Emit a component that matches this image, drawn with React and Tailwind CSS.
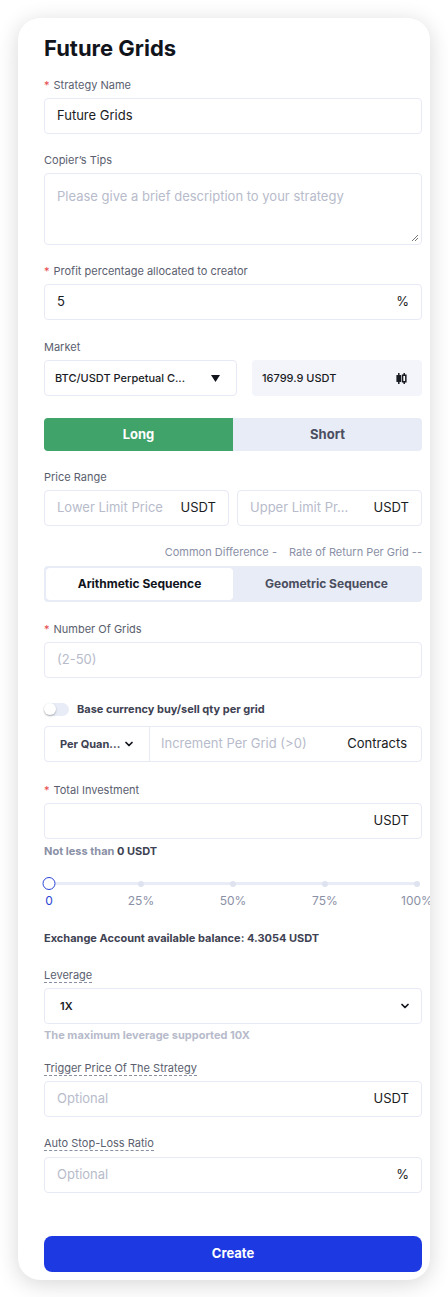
import { ChevronDown } from "lucide-react";

const font = { fontFamily: "Inter, 'Noto Sans', sans-serif" };

function Label({ children, required, dashed }) {
  return (
    <div className="flex h-4 items-center text-[11px] leading-4 text-[#5a5e6e]">
      {required && <span className="mr-1 text-[#e5484d]">*</span>}
      <span className={dashed ? "border-b border-dashed border-[#8a8fa0] leading-[14px]" : ""}>
        {children}
      </span>
    </div>
  );
}

function Input({ placeholder, value, unit }) {
  return (
    <div className="flex h-9 items-center rounded border border-[#e7eaf5] bg-white px-3">
      <span className={`flex-1 truncate text-[13px] ${value ? "text-[#1a1c24]" : "text-[#b7bbcb]"}`}>
        {value || placeholder}
      </span>
      {unit && <span className="ml-2 text-[13px] text-[#1a1c24]">{unit}</span>}
    </div>
  );
}

function CandleIcon() {
  return (
    <svg width="13" height="13" viewBox="0 0 12 12" fill="none" stroke="#1a1c24" strokeWidth="1.4">
      <line x1="3.5" y1="1" x2="3.5" y2="11" />
      <rect x="2" y="3.5" width="3" height="5" fill="#1a1c24" />
      <line x1="8.5" y1="1" x2="8.5" y2="11" />
      <rect x="7" y="3" width="3" height="6" fill="#fff" />
    </svg>
  );
}

function Slider() {
  const marks = [0, 25, 50, 75, 100];
  return (
    <div className="relative ml-[5px] mt-[20px] h-[34px] w-[368px]">
      <div className="absolute left-0 right-0 top-[3px] h-[3px] rounded bg-[#e8ecf6]" />
      {marks.slice(1).map((m) => (
        <div
          key={m}
          className="absolute top-[1.5px] h-[6px] w-[6px] -translate-x-1/2 rounded-full bg-[#dfe3f0]"
          style={{ left: `${m}%` }}
        />
      ))}
      <div className="absolute -top-[2px] left-0 h-[13px] w-[13px] -translate-x-1/2 rounded-full border-[1.5px] border-[#2a45d6] bg-white" />
      {marks.map((m) => (
        <span
          key={m}
          className={`absolute top-[14px] -translate-x-1/2 whitespace-nowrap text-[12px] leading-4 ${m === 0 ? "text-[#2a45d6]" : "text-[#8a90a6]"}`}
          style={{ left: `${m}%` }}
        >
          {m === 0 ? "0" : `${m}%`}
        </span>
      ))}
    </div>
  );
}

export default function App() {
  return (
    <div className="min-h-[1297px] bg-white pl-[18px] pt-[18px]" style={font}>
      <div className="w-[412px] overflow-hidden rounded-[22px] bg-white pb-2 pl-[26px] pr-2 pt-4 shadow-[0_4px_22px_rgba(0,0,0,0.16)]">
        <h1 className="h-7 text-[22px] font-bold leading-7 text-[#12141c]">Future Grids</h1>

        <div className="mt-[15px]">
          <Label required>Strategy Name</Label>
          <div className="mt-[5px]">
            <Input value="Future Grids" />
          </div>
        </div>

        <div className="mt-[18px]">
          <Label>Copier’s Tips</Label>
          <div className="relative mt-[5px] h-[72px] rounded border border-[#e7eaf5] px-3 pt-[13px] text-[13px] text-[#b7bbcb]">
            Please give a brief description to your strategy
            <svg className="absolute bottom-[2px] right-[2px]" width="8" height="8" viewBox="0 0 8 8" stroke="#555" strokeWidth="0.8">
              <line x1="1" y1="7" x2="7" y2="1" />
              <line x1="4" y1="7" x2="7" y2="4" />
            </svg>
          </div>
        </div>

        <div className="mt-[18px]">
          <Label required>Profit percentage allocated to creator</Label>
          <div className="mt-[5px]">
            <Input value="5" unit="%" />
          </div>
        </div>

        <div className="mt-[19px]">
          <Label>Market</Label>
          <div className="mt-[5px] flex gap-[15px]">
            <div className="flex h-9 w-[193px] items-center rounded border border-[#e7eaf5] pl-[10px] pr-[16px]">
              <span className="flex-1 text-[11px] font-medium text-[#1a1c24]">BTC/USDT Perpetual C...</span>
              <svg width="9" height="7" viewBox="0 0 9 7">
                <polygon points="0,0 9,0 4.5,7" fill="#12141c" />
              </svg>
            </div>
            <div className="flex h-9 flex-1 items-center rounded bg-[#f4f5fa] pl-[10px] pr-[14px]">
              <span className="flex-1 text-[11px] font-medium text-[#1a1c24]">16799.9 USDT</span>
              <CandleIcon />
            </div>
          </div>
        </div>

        <div className="mt-[22px] flex h-[33px] overflow-hidden rounded">
          <div className="flex flex-1 items-center justify-center bg-[#3fa36a] text-[13px] font-bold text-white">Long</div>
          <div className="flex flex-1 items-center justify-center bg-[#e8ecf6] text-[13px] font-bold text-[#4a4e60]">Short</div>
        </div>

        <div className="mt-[18px]">
          <Label>Price Range</Label>
          <div className="mt-[5px] flex gap-2">
            <div className="flex-1">
              <Input placeholder="Lower Limit Price" unit="USDT" />
            </div>
            <div className="flex-1">
              <Input placeholder="Upper Limit Pr..." unit="USDT" />
            </div>
          </div>
        </div>

        <div className="mt-[18px] flex h-4 items-center justify-end gap-3 text-[11px] text-[#8a90a6]">
          <span>Common Difference -</span>
          <span>Rate of Return Per Grid --</span>
        </div>

        <div className="mt-[6px] flex h-9 rounded bg-[#e8ecf6] p-[2px]">
          <div className="flex flex-1 items-center justify-center rounded bg-white text-[12px] font-bold text-[#12141c]">Arithmetic Sequence</div>
          <div className="flex flex-1 items-center justify-center text-[12px] font-bold text-[#4a4e60]">Geometric Sequence</div>
        </div>

        <div className="mt-[19px]">
          <Label required>Number Of Grids</Label>
          <div className="mt-[5px]">
            <Input placeholder="(2-50)" />
          </div>
        </div>

        <div className="mt-[23px] flex h-4 items-center gap-2">
          <div className="relative h-[13px] w-[25px] rounded-full bg-[#e8ecf6]">
            <div className="absolute left-0 top-[0.5px] h-3 w-3 rounded-full bg-white shadow-[0_1px_2px_rgba(0,0,0,0.3)]" />
          </div>
          <span className="text-[11px] font-bold text-[#3e4252]">Base currency buy/sell qty per grid</span>
        </div>

        <div className="mt-[9px] flex h-9 rounded border border-[#e7eaf5]">
          <div className="flex w-[105px] items-center border-r border-[#e7eaf5] pl-[15px] pr-[14px]">
            <span className="flex-1 text-[11px] font-bold text-[#3e4252]">Per Quan...</span>
            <ChevronDown size={12} strokeWidth={3.5} className="text-[#12141c]" />
          </div>
          <div className="flex flex-1 items-center pl-[11px] pr-[14px]">
            <span className="flex-1 text-[13px] text-[#b7bbcb]">Increment Per Grid (&gt;0)</span>
            <span className="text-[13px] text-[#1a1c24]">Contracts</span>
          </div>
        </div>

        <div className="mt-[20px]">
          <Label required>Total Investment</Label>
          <div className="mt-[5px]">
            <Input value="" unit="USDT" />
          </div>
        </div>

        <div className="mt-[4px] h-4 text-[11px] font-bold leading-4 text-[#8a90a6]">
          Not less than <span className="text-[#3e4252]">0 USDT</span>
        </div>

        <Slider />

        <div className="mt-[17px] h-4 text-[11px] font-bold leading-4 text-[#3e4252]">
          Exchange Account available balance: 4.3054 USDT
        </div>

        <div className="mt-[21px]">
          <Label dashed>Leverage</Label>
          <div className="mt-[5px] flex h-9 items-center rounded border border-[#e7eaf5] pl-[15px] pr-[10px]">
            <span className="flex-1 text-[11px] font-semibold text-[#1a1c24]">1X</span>
            <ChevronDown size={12} strokeWidth={3.5} className="text-[#12141c]" />
          </div>
        </div>

        <div className="mt-[3px] h-4 text-[11px] font-bold leading-4 text-[#b7bbcb]">
          The maximum leverage supported 10X
        </div>

        <div className="mt-[17px]">
          <Label dashed>Trigger Price Of The Strategy</Label>
          <div className="mt-[5px]">
            <Input placeholder="Optional" unit="USDT" />
          </div>
        </div>

        <div className="mt-[18px]">
          <Label dashed>Auto Stop-Loss Ratio</Label>
          <div className="mt-[6px]">
            <Input placeholder="Optional" unit="%" />
          </div>
        </div>

        <button className="mt-[43px] flex h-9 w-full items-center justify-center rounded-lg bg-[#1d3ae2] text-[13px] font-bold text-white">
          Create
        </button>
      </div>
    </div>
  );
}
